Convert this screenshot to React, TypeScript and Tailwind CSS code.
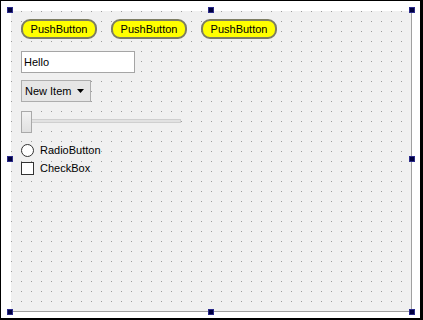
import React from "react";

const font = { fontFamily: '"Liberation Sans", Arial, sans-serif' };

// selection handles drawn over the form edges
function Handle({ className }: { className: string }) {
  return (
    <div
      className={`absolute h-[6px] w-[6px] border border-[#2a2a8a] bg-[#000040] ${className}`}
    />
  );
}

function PushButton() {
  return (
    <button className="flex h-[20px] w-[76px] items-center justify-center rounded-[9px] border-2 border-[#7d7d62] bg-[#ffff00] text-[11px] text-black">
      PushButton
    </button>
  );
}

export default function App() {
  return (
    <div
      className="relative h-[320px] w-[423px] border-t border-l border-r-[3px] border-b-2 border-black bg-white"
      style={font}
    >
      <div className="ml-[10px] mt-[10px] flex h-[301px] w-[401px] flex-col items-start border-r border-b border-[#a0a0a0] bg-[#f0f0f0] bg-[conic-gradient(at_1px_1px,transparent_270deg,#9c9c9c_0)] bg-[length:10px_10px] pl-[10px] pt-[8px]">
        <div className="flex gap-[14px]">
          <PushButton />
          <PushButton />
          <PushButton />
        </div>

        <div className="mt-[12px] flex h-[22px] w-[114px] items-center border border-[#a5a5a5] bg-white pl-[2px] text-[11px] text-black">
          Hello
        </div>

        <div className="mt-[7px] flex h-[22px] w-[70px] items-center justify-between border border-[#adadad] bg-[#e6e6e6] pl-[3px] pr-[6px] text-[11px] text-black">
          <span>New Item</span>
          <svg width="7" height="4" viewBox="0 0 7 4">
            <path d="M0 0h7L3.5 4z" fill="#000" />
          </svg>
        </div>

        <div className="relative mt-[9px] h-[22px] w-[160px]">
          <div className="absolute left-0 right-0 top-[8px] h-[4px] border border-[#cfcfcf] bg-[#e2e2e2]" />
          <div className="absolute left-0 top-0 h-[22px] w-[11px] border border-[#a9a9a9] bg-gradient-to-b from-[#f2f2f2] to-[#e0e0e0]" />
        </div>

        <div className="mt-[9px] flex h-[16px] items-center gap-[6px] text-[11px] text-black">
          <div className="h-[13px] w-[13px] rounded-full border border-[#333] bg-white" />
          <span>RadioButton</span>
        </div>

        <div className="mt-[2px] flex h-[16px] items-center gap-[6px] text-[11px] text-black">
          <div className="h-[13px] w-[13px] border border-[#333] bg-white" />
          <span>CheckBox</span>
        </div>
      </div>

      <Handle className="left-[6px] top-[6px]" />
      <Handle className="left-[207px] top-[6px]" />
      <Handle className="left-[408px] top-[6px]" />
      <Handle className="left-[408px] top-[155px]" />
      <Handle className="left-[408px] top-[308px]" />
      <Handle className="left-[207px] top-[308px]" />
      <Handle className="left-[6px] top-[308px]" />
      <Handle className="left-[6px] top-[155px]" />
    </div>
  );
}
